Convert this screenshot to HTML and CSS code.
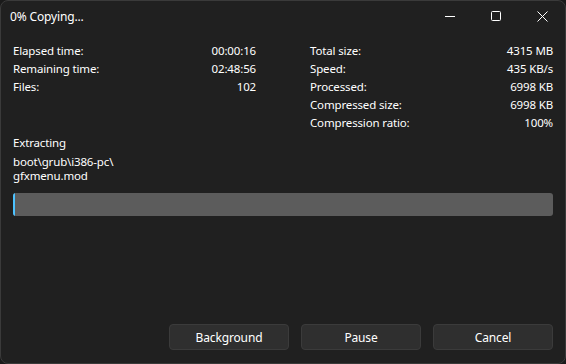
FILE: index.html
```html
<!DOCTYPE html>
<html lang="en">
<head>
    <title>0% Copying...</title>
    <meta charset="utf-8">
    <link rel="stylesheet" href="styles.css">
</head>
<body>
    <div class="window">
        <div class="titlebar">
            <span class="title">0% Copying...</span>
            <div class="controls">
                <span class="ctl">
                    <svg width="10" height="10" viewBox="0 0 10 10"><path d="M0 5.5h10" stroke="#fff" stroke-width="1"/></svg>
                </span>
                <span class="ctl">
                    <svg width="10" height="10" viewBox="0 0 10 10"><rect x="0.5" y="0.5" width="9" height="9" rx="1" fill="none" stroke="#fff" stroke-width="1"/></svg>
                </span>
                <span class="ctl">
                    <svg width="11" height="11" viewBox="0 0 11 11"><path d="M0.5 0.5l10 10M10.5 0.5l-10 10" stroke="#fff" stroke-width="1"/></svg>
                </span>
            </div>
        </div>

        <div class="stats">
            <div class="column">
                <div class="row"><span>Elapsed time:</span><span>00:00:16</span></div>
                <div class="row"><span>Remaining time:</span><span>02:48:56</span></div>
                <div class="row"><span>Files:</span><span>102</span></div>
            </div>
            <div class="column">
                <div class="row"><span>Total size:</span><span>4315 MB</span></div>
                <div class="row"><span>Speed:</span><span>435 KB/s</span></div>
                <div class="row"><span>Processed:</span><span>6998 KB</span></div>
                <div class="row"><span>Compressed size:</span><span>6998 KB</span></div>
                <div class="row"><span>Compression ratio:</span><span>100%</span></div>
            </div>
        </div>

        <div class="status">Extracting</div>
        <div class="path">boot\grub\i386-pc\<br>gfxmenu.mod</div>

        <div class="progress">
            <div class="progress-fill"></div>
        </div>

        <div class="buttons">
            <button class="btn">Background</button>
            <button class="btn">Pause</button>
            <button class="btn">Cancel</button>
        </div>
    </div>
</body>
</html>
```

FILE: styles.css
```css
* {
    box-sizing: border-box;
}

html {
    background-color: #1a1a1a;
}

body {
    margin: 0;
    font-family: "Noto Sans", "Liberation Sans", sans-serif;
    font-size: 11.5px;
    letter-spacing: -0.15px;
    color: #ffffff;
}

.window {
    width: 566px;
    height: 364px;
    background-color: #202020;
    border: 1px solid #3a3a3a;
    border-radius: 8px;
    display: flex;
    flex-direction: column;
    padding: 0 12px 13px 12px;
}

.titlebar {
    height: 30px;
    display: flex;
    align-items: center;
    margin: 0 -12px 0 -3px;
}

.title {
    flex: 1;
    font-size: 12px;
}

.controls {
    display: flex;
    height: 100%;
}

.ctl {
    width: 46px;
    height: 100%;
    display: flex;
    align-items: center;
    justify-content: center;
}

.stats {
    display: grid;
    grid-template-columns: 243px 243px;
    column-gap: 54px;
    margin-top: 11px;
}

.row {
    display: flex;
    justify-content: space-between;
    height: 18px;
    line-height: 18px;
}

.status {
    margin-top: 2px;
    height: 18px;
    line-height: 18px;
}

.path {
    margin-top: 3px;
    line-height: 14px;
}

.progress {
    margin-top: 10px;
    height: 23px;
    background-color: #5c5c5c;
    border-radius: 3px;
    overflow: hidden;
}

.progress-fill {
    width: 2px;
    height: 100%;
    background-color: #4cc2ff;
}

.buttons {
    margin-top: auto;
    display: flex;
    justify-content: flex-end;
    gap: 12px;
}

.btn {
    width: 120px;
    height: 26px;
    background-color: #2f2f2f;
    border: 1px solid #3b3b3b;
    border-radius: 4px;
    color: #ffffff;
    font-family: inherit;
    font-size: 12px;
    letter-spacing: inherit;
    padding: 0;
}
```
